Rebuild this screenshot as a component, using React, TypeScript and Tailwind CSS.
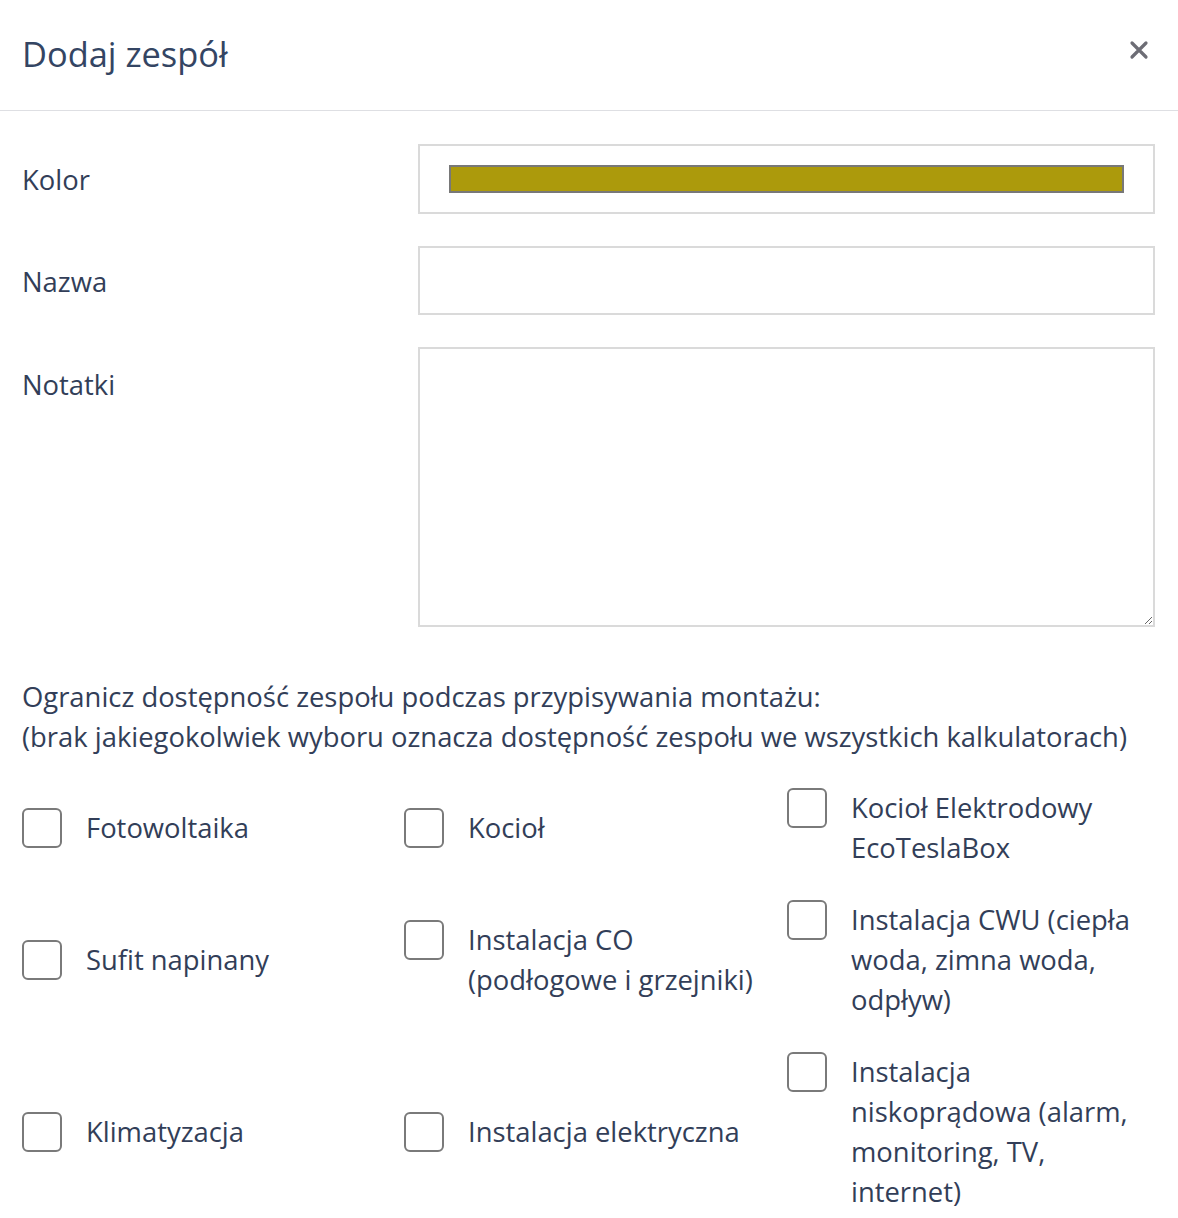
import { useState } from "react";

const options = [
  "Fotowoltaika",
  "Kocioł",
  "Kocioł Elektrodowy EcoTeslaBox",
  "Sufit napinany",
  "Instalacja CO (podłogowe i grzejniki)",
  "Instalacja CWU (ciepła woda, zimna woda, odpływ)",
  "Klimatyzacja",
  "Instalacja elektryczna",
  "Instalacja niskoprądowa (alarm, monitoring, TV, internet)",
];

const Check = ({ label }: { label: string }) => {
  const [checked, setChecked] = useState(false);
  return (
    <label className="flex items-start gap-x-[24px] pr-[16px] cursor-pointer">
      <span
        onClick={() => setChecked(!checked)}
        className="shrink-0 w-[40px] h-[40px] border-2 border-[#7a7a7a] rounded-[6px] bg-white"
      />
      <span className="leading-[40px]">{label}</span>
    </label>
  );
};

const App = () => {
  return (
    <div
      className="w-[1178px] min-h-[1218px] bg-white text-[#323e58] text-[27.4px]"
      style={{ fontFamily: '"Open Sans", "Noto Sans", sans-serif' }}
    >
      <div className="h-[111px] flex items-center justify-between pl-[22px] pr-[29px] border-b border-[#dedfe3]">
        <h2 className="text-[34.4px] text-[#344563] leading-none -mt-[2px]">
          Dodaj zespół
        </h2>
        <button className="text-[#6d6d75] -mt-[10px]">
          <svg width="20" height="20" viewBox="0 0 20 20">
            <path
              d="M3 3 L17 17 M17 3 L3 17"
              stroke="currentColor"
              strokeWidth="3.2"
              strokeLinecap="round"
            />
          </svg>
        </button>
      </div>

      <div className="pl-[22px] pr-[23px] pt-[33px]">
        <div className="grid grid-cols-[396px_1fr] gap-y-[32px]">
          <div className="pt-[16px] leading-[40px]">Kolor</div>
          <div className="h-[70px] border-2 border-[#dadada] flex items-center px-[29px]">
            <div className="w-full h-[28px] border-2 border-[#787878] bg-[#ac9a0c]" />
          </div>

          <div className="pt-[16px] leading-[40px]">Nazwa</div>
          <input
            type="text"
            className="h-[69px] border-2 border-[#dadada] px-4 outline-none"
          />

          <div className="pt-[18px] leading-[40px]">Notatki</div>
          <textarea className="h-[280px] border-2 border-[#dadada] p-4 outline-none" />
        </div>

        <p className="mt-[50px] leading-[40px]">
          Ogranicz dostępność zespołu podczas przypisywania montażu:
          <br />
          (brak jakiegokolwiek wyboru oznacza dostępność zespołu we wszystkich
          kalkulatorach)
        </p>

        <div className="mt-[31px] grid grid-cols-[382px_383px_1fr] items-center gap-y-[32px]">
          {options.map((o) => (
            <Check key={o} label={o} />
          ))}
        </div>
      </div>
    </div>
  );
};

export default App;
